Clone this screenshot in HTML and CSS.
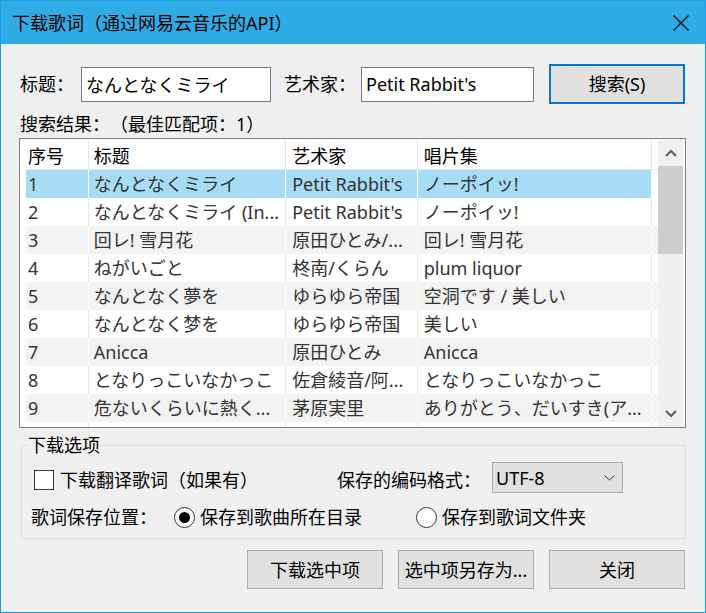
FILE: index.html
```html
<!DOCTYPE html>
<html lang="zh-CN">
<head>
<meta charset="utf-8">
<title>下载歌词</title>
<link rel="stylesheet" href="styles.css">
</head>
<body>
<div class="window">
  <div class="titlebar">
    <span class="title">下载歌词（通过网易云音乐的API）</span>
    <svg class="close" width="16" height="16" viewBox="0 0 16 16"><path d="M0.5 0.5L15.5 15.5M15.5 0.5L0.5 15.5" stroke="#000" stroke-width="1.1" fill="none"/></svg>
  </div>
  <div class="content">
    <div class="search-row">
      <span class="lbl lbl-title">标题：</span>
      <input class="field field-title" type="text" value="なんとなくミライ">
      <span class="lbl lbl-artist">艺术家：</span>
      <input class="field field-artist" type="text" value="Petit Rabbit's">
      <button class="btn btn-default">搜索(S)</button>
    </div>
    <div class="caption">搜索结果：（最佳匹配项：1）</div>
    <div class="listview">
      <div class="list">
        <div class="row header">
          <div class="cell c1">序号</div><div class="cell c2">标题</div><div class="cell c3">艺术家</div><div class="cell c4">唱片集</div><div class="cell filler"></div>
        </div>
        <div class="row sel">
          <div class="cell c1">1</div><div class="cell c2">なんとなくミライ</div><div class="cell c3">Petit Rabbit's</div><div class="cell c4">ノーポイッ!</div><div class="cell filler"></div>
        </div>
        <div class="row">
          <div class="cell c1">2</div><div class="cell c2">なんとなくミライ (In...</div><div class="cell c3">Petit Rabbit's</div><div class="cell c4">ノーポイッ!</div><div class="cell filler"></div>
        </div>
        <div class="row alt">
          <div class="cell c1">3</div><div class="cell c2">回レ! 雪月花</div><div class="cell c3">原田ひとみ/...</div><div class="cell c4">回レ! 雪月花</div><div class="cell filler"></div>
        </div>
        <div class="row">
          <div class="cell c1">4</div><div class="cell c2">ねがいごと</div><div class="cell c3">柊南/くらん</div><div class="cell c4">plum liquor</div><div class="cell filler"></div>
        </div>
        <div class="row alt">
          <div class="cell c1">5</div><div class="cell c2">なんとなく夢を</div><div class="cell c3">ゆらゆら帝国</div><div class="cell c4">空洞です / 美しい</div><div class="cell filler"></div>
        </div>
        <div class="row">
          <div class="cell c1">6</div><div class="cell c2">なんとなく梦を</div><div class="cell c3">ゆらゆら帝国</div><div class="cell c4">美しい</div><div class="cell filler"></div>
        </div>
        <div class="row alt">
          <div class="cell c1">7</div><div class="cell c2">Anicca</div><div class="cell c3">原田ひとみ</div><div class="cell c4">Anicca</div><div class="cell filler"></div>
        </div>
        <div class="row">
          <div class="cell c1">8</div><div class="cell c2">となりっこいなかっこ</div><div class="cell c3">佐倉綾音/阿...</div><div class="cell c4">となりっこいなかっこ</div><div class="cell filler"></div>
        </div>
        <div class="row alt">
          <div class="cell c1">9</div><div class="cell c2">危ないくらいに熱く...</div><div class="cell c3">茅原実里</div><div class="cell c4">ありがとう、だいすき(ア...</div><div class="cell filler"></div>
        </div>
        <div class="row">
          <div class="cell c1"></div><div class="cell c2"></div><div class="cell c3"></div><div class="cell c4"></div><div class="cell filler"></div>
        </div>
      </div>
      <div class="scrollbar">
        <div class="sb-btn"><svg width="12" height="8" viewBox="0 0 12 8"><path d="M1 7L6 2L11 7" stroke="#606060" stroke-width="2.2" fill="none"/></svg></div>
        <div class="sb-thumb"></div>
        <div class="sb-track"></div>
        <div class="sb-btn"><svg width="12" height="8" viewBox="0 0 12 8"><path d="M1 1L6 6L11 1" stroke="#606060" stroke-width="2.2" fill="none"/></svg></div>
      </div>
    </div>
    <fieldset class="options">
      <legend>下载选项</legend>
      <div class="opt-row1">
        <label class="check"><span class="box"></span><span class="check-text">下载翻译歌词（如果有）</span></label>
        <span class="enc-label">保存的编码格式：</span>
        <div class="combo"><span>UTF-8</span><svg width="11" height="6" viewBox="0 0 11 6"><path d="M0.5 0.5L5.5 5L10.5 0.5" stroke="#333" stroke-width="1" fill="none"/></svg></div>
      </div>
      <div class="opt-row2">
        <span class="loc-label">歌词保存位置：</span>
        <label class="radio-item first"><span class="radio on"></span><span class="radio-text">保存到歌曲所在目录</span></label>
        <label class="radio-item"><span class="radio"></span><span class="radio-text">保存到歌词文件夹</span></label>
      </div>
    </fieldset>
    <div class="button-row">
      <button class="btn">下载选中项</button>
      <button class="btn">选中项另存为...</button>
      <button class="btn">关闭</button>
    </div>
  </div>
</div>
</body>
</html>
```
FILE: styles.css
```css
html, body {
  margin: 0;
  padding: 0;
}
body {
  font-family: "Noto Sans", "Noto Sans CJK SC", sans-serif;
  font-size: 18px;
  line-height: 24px;
  color: #000;
  text-spacing-trim: space-all;
}
.window {
  width: 706px;
  height: 613px;
  box-sizing: border-box;
  border: 1px solid #1a9de3;
  background: #f0f0f0;
  display: flex;
  flex-direction: column;
  overflow: hidden;
}
.titlebar {
  height: 43px;
  flex: none;
  background: #2fabe6;
  display: flex;
  align-items: center;
  justify-content: space-between;
  padding: 0 16px 0 11px;
}
.close {
  display: block;
}
.content {
  padding: 20px 19px 0 18px;
  display: flex;
  flex-direction: column;
}
.search-row {
  display: flex;
  align-items: center;
  height: 40px;
}
.lbl {
  white-space: nowrap;
}
.lbl-title {
  margin-left: 1px;
  width: 61px;
}
.lbl-artist {
  margin-left: 13px;
  width: 77px;
}
.field {
  box-sizing: border-box;
  height: 35px;
  border: 1px solid #7a7a7a;
  background: #fff;
  font: inherit;
  color: #000;
  padding: 0 0 1px 4px;
  margin: 0;
  outline: none;
  text-spacing-trim: space-all;
}
.field-title {
  width: 190px;
}
.field-artist {
  width: 173px;
}
.btn {
  box-sizing: border-box;
  width: 136px;
  height: 39px;
  background: #e1e1e1;
  border: 1px solid #adadad;
  font: inherit;
  color: #000;
  padding: 0;
  margin: 0;
}
.btn-default {
  height: 40px;
  margin-left: 15px;
  border: 2px solid #0078d7;
}
.caption {
  margin: 8px 0 0 1px;
  height: 24px;
}
.listview {
  margin-top: 2px;
  box-sizing: border-box;
  width: 667px;
  height: 290px;
  border: 1px solid #828282;
  background: #fff;
  padding: 1px 2px 0 6px;
  display: flex;
  overflow: hidden;
}
.list {
  width: 632px;
  overflow: hidden;
  color: #333;
}
.row {
  display: flex;
  height: 28px;
}
.cell {
  box-sizing: border-box;
  border-right: 1px solid #e8e8e8;
  padding-left: 6px;
  white-space: nowrap;
  overflow: hidden;
  line-height: 28px;
}
.c1 { width: 63px; padding-left: 2px; }
.c2 { width: 198px; padding-left: 5px; }
.c3 { width: 132px; }
.c4 { width: 235px; }
.filler { flex: 1; border-right: none; }
.row.header {
  height: 30px;
  border-bottom: 1px solid #e5e5e5;
  box-sizing: border-box;
  color: #000;
}
.row.header .cell {
  line-height: 26px;
  padding-top: 3px;
  border-right-color: #e5e5e5;
}
.row.header .filler {
  border-right: none;
}
.row.alt {
  background: #f3f3f3;
}
.row.alt .cell {
  border-right-color: #fcfcfc;
}
.row.sel .cell {
  background: #a6dcf6;
  border-right-color: #fff;
}
.row.sel .filler {
  background: #fff;
}
.scrollbar {
  width: 25px;
  flex: none;
  background: #f0f0f0;
  display: flex;
  flex-direction: column;
}
.sb-btn {
  height: 26px;
  flex: none;
  display: flex;
  align-items: center;
  justify-content: center;
}
.sb-btn svg {
  display: block;
}
.sb-thumb {
  height: 88px;
  flex: none;
  background: #cdcdcd;
}
.sb-track {
  flex: 1;
}
.options {
  margin: 5px 0 0 2px;
  padding: 4px 0 8px 0;
  border: 1px solid #dcdcdc;
  width: 665px;
  box-sizing: border-box;
  min-width: 0;
}
.options legend {
  margin-left: 5px;
  padding: 0 1px;
  line-height: 24px;
}
.opt-row1 {
  display: flex;
  align-items: flex-start;
  height: 32px;
  margin-left: 9px;
}
.check {
  display: flex;
  align-items: flex-start;
  width: 306px;
  flex: none;
}
.box {
  box-sizing: border-box;
  width: 20px;
  height: 20px;
  border: 1px solid #333;
  background: #fff;
  margin: 9px 0 0 3px;
  flex: none;
}
.check-text {
  margin: 7px 0 0 6px;
}
.enc-label {
  margin-top: 7px;
  white-space: nowrap;
}
.combo {
  box-sizing: border-box;
  width: 131px;
  height: 31px;
  margin: 1px 0 0 11px;
  border: 1px solid #adadad;
  background: #e1e1e1;
  display: flex;
  align-items: center;
  justify-content: space-between;
  padding: 0 7px 0 3px;
}
.combo svg {
  display: block;
}
.opt-row2 {
  display: flex;
  align-items: center;
  height: 26px;
  margin: 11px 0 0 9px;
}
.loc-label {
  width: 143px;
  flex: none;
}
.radio-item {
  display: flex;
  align-items: center;
}
.radio-item.first {
  width: 242px;
  flex: none;
}
.radio {
  box-sizing: border-box;
  width: 21px;
  height: 21px;
  border: 1px solid #333;
  border-radius: 50%;
  background: #fff;
  display: flex;
  align-items: center;
  justify-content: center;
  flex: none;
}
.radio.on::after {
  content: "";
  width: 11px;
  height: 11px;
  border-radius: 50%;
  background: #000;
}
.radio-text {
  margin-left: 5px;
}
.button-row {
  display: flex;
  justify-content: flex-end;
  gap: 15px;
  margin-top: 11px;
  padding-right: 1px;
}
```
